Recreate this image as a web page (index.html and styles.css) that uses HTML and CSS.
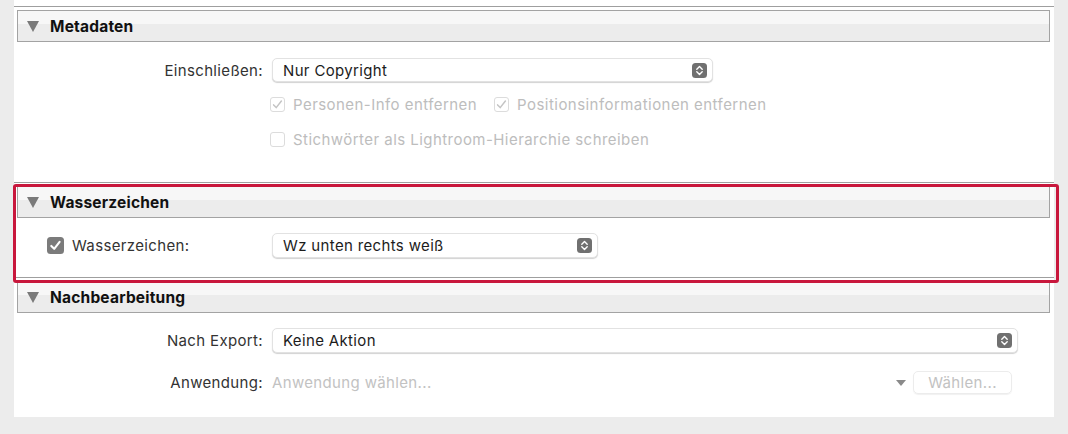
FILE: index.html
```html
<!DOCTYPE html>
<html lang="de">
<head>
<meta charset="utf-8">
<link rel="stylesheet" href="styles.css">
</head>
<body>
<div class="panel">
  <div class="topline"></div>

  <section class="section">
    <div class="hdr"><span class="tri"></span><span class="title">Metadaten</span></div>
    <div class="body body-meta">
      <div class="row">
        <span class="lbl">Einschließen:</span>
        <div class="select sel-meta"><span class="val">Nur Copyright</span>
          <svg class="stepper" width="15" height="15" viewBox="0 0 15 15"><rect x="0" y="0" width="15" height="15" rx="3.5" fill="#707070"/><path d="M4.8 6.2 L7.5 3.6 L10.2 6.2 M4.8 8.8 L7.5 11.4 L10.2 8.8" fill="none" stroke="#fff" stroke-width="1.4" stroke-linecap="round" stroke-linejoin="round"/></svg>
        </div>
      </div>
      <div class="crow crow1">
        <span class="cb dis"><svg width="15" height="15" viewBox="0 0 15 15"><path d="M3.6 7.9 L6.2 10.6 L11.4 4" fill="none" stroke="#c4c4c4" stroke-width="1.5" stroke-linecap="round" stroke-linejoin="round"/></svg></span>
        <span class="dtext">Personen-Info entfernen</span>
        <span class="cb dis cb2"><svg width="15" height="15" viewBox="0 0 15 15"><path d="M3.6 7.9 L6.2 10.6 L11.4 4" fill="none" stroke="#c4c4c4" stroke-width="1.5" stroke-linecap="round" stroke-linejoin="round"/></svg></span>
        <span class="dtext">Positionsinformationen entfernen</span>
      </div>
      <div class="crow crow2">
        <span class="cb dis"></span>
        <span class="dtext">Stichwörter als Lightroom-Hierarchie schreiben</span>
      </div>
    </div>
  </section>

  <section class="section">
    <div class="hdr"><span class="tri"></span><span class="title">Wasserzeichen</span></div>
    <div class="body body-wz">
      <div class="row wzrow">
        <div class="wzlabel">
          <span class="cb checked"><svg width="17" height="17" viewBox="0 0 17 17"><path d="M4.3 8.9 L7.2 11.8 L12.6 4.9" fill="none" stroke="#fff" stroke-width="2.1" stroke-linecap="round" stroke-linejoin="round"/></svg></span>
          <span class="lbl2">Wasserzeichen:</span>
        </div>
        <div class="select sel-wz"><span class="val">Wz unten rechts weiß</span>
          <svg class="stepper" width="15" height="15" viewBox="0 0 15 15"><rect x="0" y="0" width="15" height="15" rx="3.5" fill="#707070"/><path d="M4.8 6.2 L7.5 3.6 L10.2 6.2 M4.8 8.8 L7.5 11.4 L10.2 8.8" fill="none" stroke="#fff" stroke-width="1.4" stroke-linecap="round" stroke-linejoin="round"/></svg>
        </div>
      </div>
    </div>
  </section>

  <section class="section last">
    <div class="hdr"><span class="tri"></span><span class="title">Nachbearbeitung</span></div>
    <div class="body body-nb">
      <div class="row">
        <span class="lbl">Nach Export:</span>
        <div class="select sel-nb"><span class="val">Keine Aktion</span>
          <svg class="stepper" width="15" height="15" viewBox="0 0 15 15"><rect x="0" y="0" width="15" height="15" rx="3.5" fill="#707070"/><path d="M4.8 6.2 L7.5 3.6 L10.2 6.2 M4.8 8.8 L7.5 11.4 L10.2 8.8" fill="none" stroke="#fff" stroke-width="1.4" stroke-linecap="round" stroke-linejoin="round"/></svg>
        </div>
      </div>
      <div class="row approw">
        <span class="lbl">Anwendung:</span>
        <span class="placeholder">Anwendung wählen...</span>
        <span class="smalltri"></span>
        <span class="btn">Wählen...</span>
      </div>
    </div>
  </section>

  <div class="highlight"></div>
</div>
</body>
</html>
```

FILE: styles.css
```css
* { box-sizing: border-box; }
html, body { margin: 0; padding: 0; }
body {
  background: #ececec;
  font-family: Inter, "Noto Sans", sans-serif;
  font-size: 15px;
  letter-spacing: 0.35px;
  color: #2a2a2a;
  width: 1068px;
  height: 434px;
  overflow: hidden;
}
.panel {
  position: relative;
  margin-left: 14px;
  width: 1040px;
  background: #fff;
  padding-top: 6px;
}
.topline {
  height: 1px;
  background: #9f9f9f;
}
.section .hdr {
  margin: 3px 4px 0 3px;
  height: 32px;
  border: 1px solid #a3a3a3;
  background: linear-gradient(#f7f7f7 0, #f7f7f7 42%, #ececec 42%, #ececec 100%);
  display: flex;
  align-items: center;
  padding-left: 9px;
}
.tri {
  width: 0; height: 0;
  border-left: 6.5px solid transparent;
  border-right: 6.5px solid transparent;
  border-top: 11px solid #7a7a7a;
  margin-right: 11px;
  margin-top: 1px;
}
.title {
  font-weight: 700;
  font-size: 15.5px;
  letter-spacing: 0.2px;
  color: #111;
}
.body {
  border-bottom: 1px solid #9f9f9f;
}
.section.last .body { border-bottom: none; }

.body-meta { padding: 16px 0 32px; }
.body-wz { padding: 15px 0 19px; }
.body-nb { padding: 15px 0 23px; }

.row {
  display: flex;
  align-items: center;
}
.lbl {
  width: 249px;
  text-align: right;
  margin-right: 9px;
  color: #333;
}
.select {
  height: 24px;
  border-radius: 5px;
  border: 1px solid #e2e2e2;
  box-shadow: 0 1px 1px rgba(0,0,0,0.18);
  display: flex;
  align-items: center;
  justify-content: space-between;
  padding: 0 5px 0 10px;
  color: #1c1c1c;
  background: #fff;
}
.sel-meta { width: 441px; }
.sel-wz { width: 326px; height: 25px; }
.sel-nb { width: 746px; height: 25px; }
.stepper { display: block; }

.crow {
  display: flex;
  align-items: center;
  height: 22px;
  padding-left: 256px;
}
.crow1 { margin-top: 11px; }
.crow2 { margin-top: 13px; }
.cb {
  width: 15px; height: 15px;
  border-radius: 3px;
  display: inline-flex;
  align-items: center;
  justify-content: center;
  flex: none;
}
.cb.dis {
  border: 1px solid #dcdcdc;
  background: #fff;
}
.cb.dis svg { margin: -1px; }
.dtext {
  color: #bdbdbd;
  margin-left: 8px;
  letter-spacing: 0.45px;
}
.cb2 { margin-left: 17px; }

.wzrow { padding-left: 33px; }
.wzlabel {
  width: 225px;
  display: flex;
  align-items: center;
}
.cb.checked {
  width: 17px; height: 17px;
  background: #7b7b7b;
  border-radius: 3.5px;
}
.lbl2 { margin-left: 8px; color: #333; }

.approw { margin-top: 18px; height: 23px; }
.placeholder {
  color: #c2c2c2;
  flex: 1;
}
.smalltri {
  width: 0; height: 0;
  border-left: 5px solid transparent;
  border-right: 5px solid transparent;
  border-top: 6px solid #8a8a8a;
  margin-right: 7px;
}
.btn {
  width: 99px;
  height: 23px;
  margin-right: 42px;
  border: 1px solid #ececec;
  border-radius: 5px;
  box-shadow: 0 1px 1px rgba(0,0,0,0.06);
  color: #c2c2c2;
  display: flex;
  align-items: center;
  justify-content: center;
}

.highlight {
  position: absolute;
  left: -1px;
  top: 184px;
  width: 1046px;
  height: 99px;
  border: 3px solid #c8173c;
  border-radius: 3px;
  pointer-events: none;
}
```
